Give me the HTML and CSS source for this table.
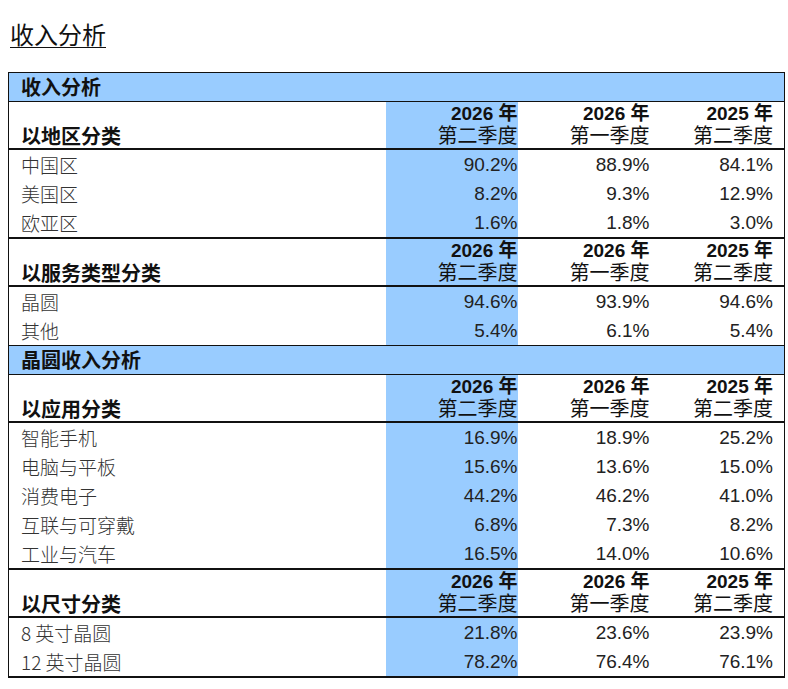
FILE: index.html
```html
<!DOCTYPE html>
<html lang="zh-CN">
<head>
<meta charset="utf-8">
<title>收入分析</title>
<link rel="stylesheet" href="styles.css">
</head>
<body>
<h1 class="title">收入分析</h1>
<table class="rev">
  <colgroup>
    <col class="c-label"><col class="c-num"><col class="c-num"><col class="c-last">
  </colgroup>
  <tbody>
    <tr class="sec"><td colspan="4">收入分析</td></tr>
    <tr class="hdr">
      <td class="lbl">以地区分类</td>
      <td class="num hl"><b>2026 年</b><br>第二季度</td>
      <td class="num"><b>2026 年</b><br>第一季度</td>
      <td class="num"><b>2025 年</b><br>第二季度</td>
    </tr>
    <tr class="row"><td class="lbl">中国区</td><td class="num hl">90.2%</td><td class="num">88.9%</td><td class="num">84.1%</td></tr>
    <tr class="row"><td class="lbl">美国区</td><td class="num hl">8.2%</td><td class="num">9.3%</td><td class="num">12.9%</td></tr>
    <tr class="row last"><td class="lbl">欧亚区</td><td class="num hl">1.6%</td><td class="num">1.8%</td><td class="num">3.0%</td></tr>
    <tr class="hdr">
      <td class="lbl">以服务类型分类</td>
      <td class="num hl"><b>2026 年</b><br>第二季度</td>
      <td class="num"><b>2026 年</b><br>第一季度</td>
      <td class="num"><b>2025 年</b><br>第二季度</td>
    </tr>
    <tr class="row"><td class="lbl">晶圆</td><td class="num hl">94.6%</td><td class="num">93.9%</td><td class="num">94.6%</td></tr>
    <tr class="row"><td class="lbl">其他</td><td class="num hl">5.4%</td><td class="num">6.1%</td><td class="num">5.4%</td></tr>
    <tr class="sec"><td colspan="4">晶圆收入分析</td></tr>
    <tr class="hdr">
      <td class="lbl">以应用分类</td>
      <td class="num hl"><b>2026 年</b><br>第二季度</td>
      <td class="num"><b>2026 年</b><br>第一季度</td>
      <td class="num"><b>2025 年</b><br>第二季度</td>
    </tr>
    <tr class="row"><td class="lbl">智能手机</td><td class="num hl">16.9%</td><td class="num">18.9%</td><td class="num">25.2%</td></tr>
    <tr class="row"><td class="lbl">电脑与平板</td><td class="num hl">15.6%</td><td class="num">13.6%</td><td class="num">15.0%</td></tr>
    <tr class="row"><td class="lbl">消费电子</td><td class="num hl">44.2%</td><td class="num">46.2%</td><td class="num">41.0%</td></tr>
    <tr class="row"><td class="lbl">互联与可穿戴</td><td class="num hl">6.8%</td><td class="num">7.3%</td><td class="num">8.2%</td></tr>
    <tr class="row last"><td class="lbl">工业与汽车</td><td class="num hl">16.5%</td><td class="num">14.0%</td><td class="num">10.6%</td></tr>
    <tr class="hdr">
      <td class="lbl">以尺寸分类</td>
      <td class="num hl"><b>2026 年</b><br>第二季度</td>
      <td class="num"><b>2026 年</b><br>第一季度</td>
      <td class="num"><b>2025 年</b><br>第二季度</td>
    </tr>
    <tr class="row"><td class="lbl">8 英寸晶圆</td><td class="num hl">21.8%</td><td class="num">23.6%</td><td class="num">23.9%</td></tr>
    <tr class="row end"><td class="lbl">12 英寸晶圆</td><td class="num hl">78.2%</td><td class="num">76.4%</td><td class="num">76.1%</td></tr>
  </tbody>
</table>
</body>
</html>
```

FILE: styles.css
```css
html {
  overflow: hidden;
}

body {
  margin: 0;
  padding: 8px;
  background: #ffffff;
  color: #1a1a1a;
  font-family: "Liberation Sans", "Noto Sans CJK SC", sans-serif;
}

.title {
  margin: 11px 0 0 2px;
  font-family: "Noto Sans CJK SC", sans-serif;
  font-size: 24px;
  font-weight: 400;
  line-height: 30px;
  text-decoration: underline;
  text-underline-offset: 3px;
  text-decoration-thickness: 1px;
  color: #111;
}

.rev {
  margin-top: 23px;
  width: 776px;
  table-layout: fixed;
  border-collapse: collapse;
  border-top: 1px solid #111;
  border-left: 1px solid #111;
  border-right: 1px solid #111;
}

.c-label { width: 377px; }
.c-num { width: 132px; }
.c-last { width: 135px; }

.rev td {
  padding: 0;
  font-size: 19px;
}

.sec td {
  height: 28px;
  background: #99ccff;
  border-top: 1px solid #111;
  border-bottom: 1px solid #111;
  padding-left: 12px;
  font-family: "Noto Sans CJK SC", sans-serif;
  font-size: 20px;
  font-weight: 700;
  line-height: 28px;
  color: #111;
}

.hdr td {
  height: 45px;
  vertical-align: bottom;
  line-height: 22px;
  padding-bottom: 1px;
  border-bottom: 2px solid #111;
}

.hdr .lbl {
  font-family: "Noto Sans CJK SC", sans-serif;
  font-size: 20px;
  font-weight: 700;
  padding-left: 12px;
  color: #111;
}

.hdr .num {
  font-family: "Liberation Sans", "Noto Sans CJK SC", sans-serif;
  font-size: 20px;
  color: #111;
}

.hdr .num b {
  font-weight: 700;
  font-size: 19px;
}

.row td {
  height: 29px;
  line-height: 29px;
}

.row.last td,
.row.end td {
  border-bottom: 2px solid #111;
}

.row .lbl {
  padding-left: 12px;
  font-family: "Noto Sans CJK SC", sans-serif;
  font-size: 19px;
  font-weight: 300;
  color: #333;
}

.num {
  text-align: right;
  padding-right: 10px;
  color: #222;
}

.rev td.num:last-child {
  padding-right: 11px;
}

.hl {
  background: #99ccff;
}
```
